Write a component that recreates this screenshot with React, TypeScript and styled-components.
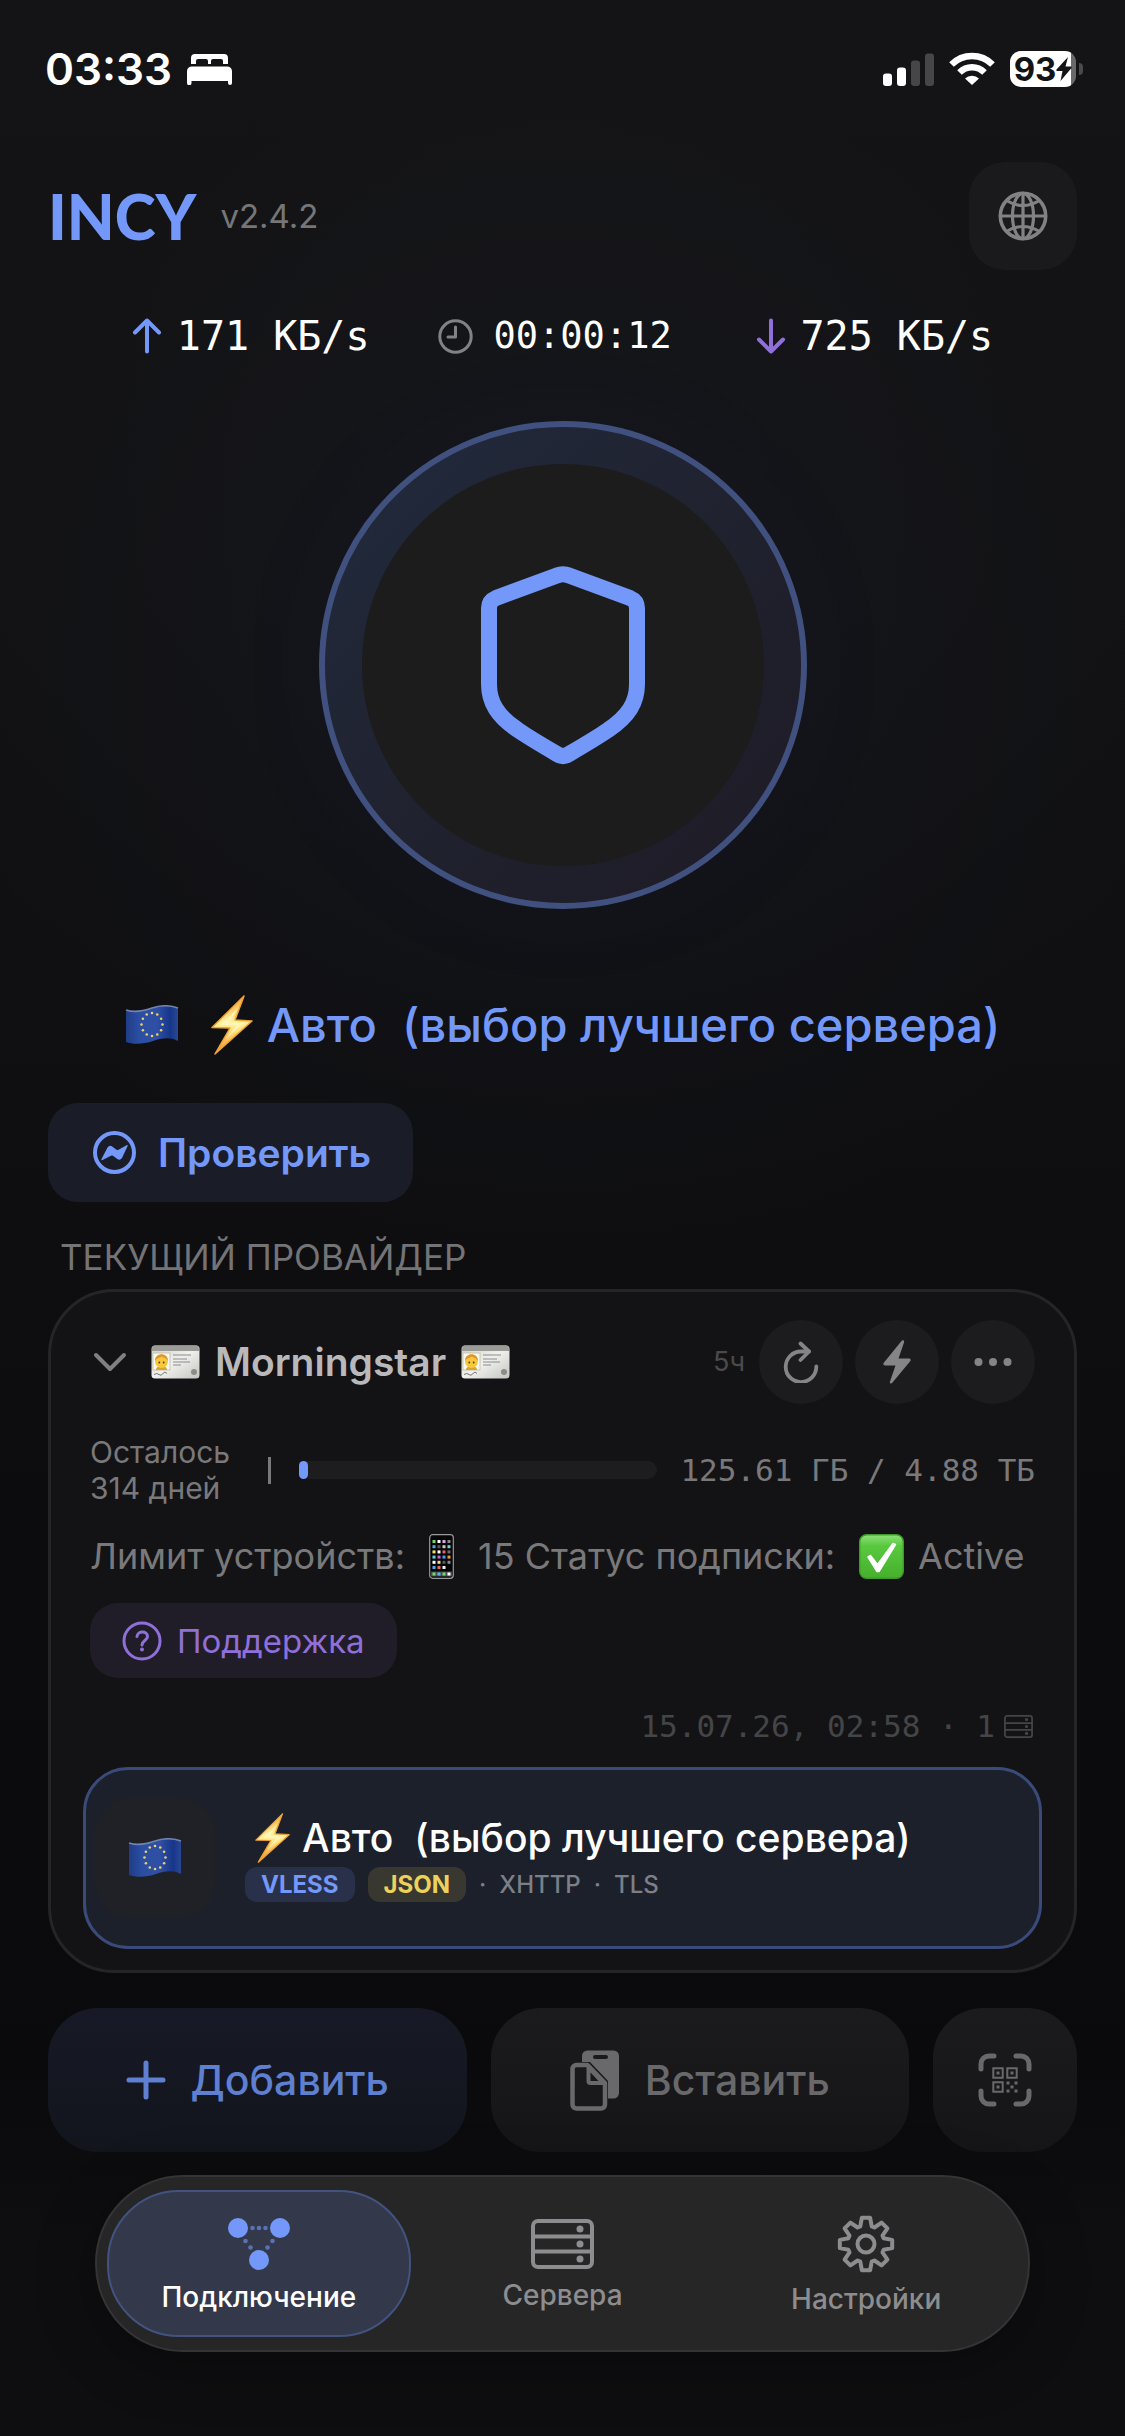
import React from "react";
import styled, { createGlobalStyle } from "styled-components";

const blue = "#7398f9";
const violet = "#8f70d8";
const mono = `"DejaVu Sans Mono", "Liberation Mono", monospace`;

const Global = createGlobalStyle`
  *, *::before, *::after { box-sizing: border-box; }
  body {
    margin: 0;
    background: #0d0d0f;
    color: #ffffff;
    font-family: Inter, "Noto Sans", sans-serif;
    -webkit-font-smoothing: antialiased;
  }
  button { font: inherit; border: 0; margin: 0; padding: 0; cursor: pointer; }
  h1, h2, h3, p { margin: 0; }
  svg { display: block; flex: none; }
`;

const Page = styled.div`
  display: flex;
  flex-direction: column;
  min-height: 100vh;
  padding: 0 48px 84px;
  background:
    radial-gradient(circle 620px at 50% 665px, rgba(80, 110, 200, 0.05), rgba(80, 110, 200, 0) 100%),
    linear-gradient(180deg, #141416 0%, #121214 25%, #0f0f11 45%, #0c0c0e 65%, #0a0a0c 85%, #0e0e10 92%, #0e0e10 100%);
`;

/* ---------- status bar ---------- */

const StatusBar = styled.div`
  display: flex;
  align-items: center;
  justify-content: space-between;
  height: 138px;
  margin: 0 -6px 0 -3px;
`;

const StatusGroup = styled.div<{ $gap: number }>`
  display: flex;
  align-items: center;
  gap: ${(p) => p.$gap}px;
`;

const Clock = styled.time`
  font-size: 44px;
  line-height: 48px;
  font-weight: 600;
`;

const Battery = styled.div`
  display: flex;
  align-items: center;
  gap: 3px;
`;

const BatteryBody = styled.div`
  display: flex;
  align-items: center;
  justify-content: center;
  width: 66px;
  height: 36px;
  border-radius: 11px;
  background: linear-gradient(90deg, #ffffff 61px, #68686a 61px);
  color: #141416;
  font-size: 33px;
  line-height: 36px;
  font-weight: 700;
`;

const BatteryCap = styled.div`
  width: 4px;
  height: 12px;
  border-radius: 0 6px 6px 0;
  background: #4a4a4c;
`;

/* ---------- header ---------- */

const Header = styled.header`
  display: flex;
  align-items: center;
  justify-content: space-between;
  margin-top: 24px;
`;

const Brand = styled.div`
  display: flex;
  align-items: center;
  gap: 24px;
`;

const Logo = styled.h1`
  font-family: Lato, Inter, sans-serif;
  font-size: 62px;
  line-height: 72px;
  font-weight: 900;
  color: ${blue};
`;

const Version = styled.span`
  font-size: 33px;
  line-height: 40px;
  color: #767678;
`;

const GlobeButton = styled.button`
  display: grid;
  place-items: center;
  width: 108px;
  height: 108px;
  border-radius: 36px;
  background: #1a1a1c;
  color: #828284;
`;

/* ---------- connection ---------- */

const Stats = styled.div`
  display: flex;
  justify-content: center;
  gap: 68px;
  margin-top: 42px;
`;

const Stat = styled.div<{ $timer?: boolean }>`
  display: flex;
  align-items: center;
  gap: ${(p) => (p.$timer ? 21 : 15)}px;
  min-width: ${(p) => (p.$timer ? 250 : 0)}px;
  font-family: ${mono};
  font-size: ${(p) => (p.$timer ? 37 : 40)}px;
  line-height: 48px;
`;

const PowerButton = styled.button`
  display: grid;
  place-items: center;
  align-self: center;
  width: 488px;
  height: 488px;
  margin-top: 61px;
  border: 6px solid #41517f;
  border-radius: 50%;
  background: linear-gradient(135deg, #21293b 10%, #20222f 50%, #1e1c27 90%);
  box-shadow: 0 0 120px rgba(70, 100, 190, 0.04);
`;

const PowerCore = styled.span`
  display: grid;
  place-items: center;
  width: 402px;
  height: 402px;
  border-radius: 50%;
  background: #1c1c1d;
`;

const CurrentServer = styled.h2`
  display: flex;
  align-items: center;
  justify-content: center;
  margin-top: 86px;
  font-size: 47px;
  line-height: 60px;
  font-weight: 500;
  white-space: pre;
  color: ${blue};
`;

const FlagGap = styled.span`
  width: 32px;
`;

const BoltGap = styled.span`
  width: 14px;
`;

const CheckButton = styled.button`
  display: flex;
  align-items: center;
  align-self: flex-start;
  gap: 22px;
  height: 99px;
  margin-top: 48px;
  padding: 0 42px 0 45px;
  border-radius: 30px;
  background: #1a1d28;
  color: ${blue};
  font-size: 39px;
  line-height: 48px;
  font-weight: 600;
`;

/* ---------- provider card ---------- */

const SectionLabel = styled.h2`
  margin-top: 35px;
  padding-left: 12px;
  font-size: 35px;
  line-height: 40px;
  font-weight: 400;
  color: #747476;
`;

const Card = styled.section`
  display: flex;
  flex-direction: column;
  margin-top: 12px;
  padding: 28px 32px 21px;
  border: 3px solid #252527;
  border-radius: 66px;
  background: #131315;
`;

const CardHeader = styled.div`
  display: flex;
  align-items: center;
  justify-content: space-between;
  padding: 0 7px 0 10px;
`;

const ProviderButton = styled.button`
  display: flex;
  align-items: center;
  background: none;
  color: #808082;
`;

const ProviderName = styled.span`
  display: flex;
  align-items: center;
  gap: 15px;
  margin-left: 24px;
  font-size: 39px;
  line-height: 48px;
  font-weight: 600;
  color: #b9b9bb;
`;

const Actions = styled.div`
  display: flex;
  align-items: center;
  gap: 12px;
`;

const Age = styled.span`
  margin-right: 2px;
  font-size: 27px;
  line-height: 36px;
  color: #4a4a4c;
`;

const RoundButton = styled.button`
  display: grid;
  place-items: center;
  width: 84px;
  height: 84px;
  border-radius: 50%;
  background: #1c1c1e;
  color: #858587;
`;

const UsageRow = styled.div`
  display: flex;
  align-items: center;
  margin-top: 30px;
  padding: 0 7px;
  font-size: 30px;
  line-height: 36px;
  color: #79797b;
`;

const DaysLeft = styled.p`
  width: 178px;
`;

const Divider = styled.span`
  width: 3px;
  height: 27px;
  background: #79797b;
`;

const Track = styled.div`
  flex: 1;
  height: 18px;
  margin: 0 23px 0 28px;
  border-radius: 9px;
  background: #1d1d1f;
`;

const Fill = styled.div`
  min-width: 9px;
  height: 100%;
  border-radius: 5px;
  background: ${blue};
`;

const Traffic = styled.span`
  font-family: ${mono};
  font-size: 31px;
  white-space: pre;
`;

const Notice = styled.p`
  display: flex;
  align-items: center;
  margin-top: 26px;
  padding: 0 7px;
  font-size: 36px;
  line-height: 48px;
  white-space: pre;
  color: #79797b;
`;

const EmojiSlot = styled.span<{ $left: number; $right: number }>`
  display: inline-flex;
  padding: 0 ${(p) => p.$right}px 0 ${(p) => p.$left}px;
`;

const SupportLink = styled.a`
  display: flex;
  align-items: center;
  align-self: flex-start;
  gap: 15px;
  height: 75px;
  margin: 23px 7px 0;
  padding: 0 32px;
  border-radius: 28px;
  background: #201d28;
  color: ${violet};
  font-size: 33px;
  line-height: 40px;
  text-decoration: none;
`;

const Updated = styled.div`
  display: flex;
  align-items: center;
  justify-content: flex-end;
  gap: 9px;
  margin-top: 28px;
  padding: 0 9px;
  font-family: ${mono};
  font-size: 31px;
  line-height: 40px;
  white-space: pre;
  color: #454547;
`;

const ServerButton = styled.button`
  display: flex;
  align-items: center;
  gap: 30px;
  height: 182px;
  margin-top: 21px;
  padding: 0 9px;
  border: 3px solid #3a4b7b;
  border-radius: 45px;
  background: #1c202b;
  color: #ffffff;
  text-align: left;
`;

const FlagTile = styled.span`
  display: grid;
  place-items: center;
  width: 120px;
  height: 120px;
  border-radius: 36px;
  background: #1f2126;
`;

const ServerInfo = styled.span`
  display: flex;
  flex-direction: column;
  gap: 2px;
  padding-bottom: 3px;
`;

const ServerName = styled.span`
  display: flex;
  align-items: center;
  gap: 12px;
  padding-left: 10px;
  font-size: 39px;
  line-height: 54px;
  font-weight: 500;
  white-space: pre;
`;

const Tags = styled.span`
  display: flex;
  align-items: center;
  gap: 13px;
  font-size: 24px;
  line-height: 35px;
  font-weight: 500;
  color: #7c7f86;
`;

const Tag = styled.span<{ $tone: "blue" | "yellow" }>`
  padding: 0 16px;
  border-radius: 12px;
  font-weight: 700;
  color: ${(p) => (p.$tone === "blue" ? blue : "#ecd15c")};
  background: ${(p) => (p.$tone === "blue" ? "#29314a" : "#393830")};
`;

/* ---------- add / paste / scan ---------- */

const ActionRow = styled.div`
  display: grid;
  grid-template-columns: 1fr 1fr 144px;
  gap: 24px;
  margin-top: 35px;
`;

const BigButton = styled.button<{ $primary?: boolean }>`
  display: flex;
  align-items: center;
  justify-content: center;
  gap: 25px;
  height: 144px;
  border-radius: 50px;
  font-size: 41px;
  line-height: 54px;
  font-weight: 500;
  background: ${(p) => (p.$primary ? "linear-gradient(#171a26, #12151c)" : "linear-gradient(#1b1b1d, #151517)")};
  color: ${(p) => (p.$primary ? "#5f7fd0" : "#69696b")};
`;

/* ---------- tab bar ---------- */

const TabBar = styled.nav`
  display: grid;
  grid-template-columns: repeat(3, 1fr);
  height: 177px;
  margin: 23px 47px 0;
  padding: 13px 10px;
  border: 2px solid #343436;
  border-radius: 88px;
  background: #262626;
  box-shadow: 0 12px 60px rgba(0, 0, 0, 0.3);
`;

const Tab = styled.a<{ $active?: boolean }>`
  display: flex;
  flex-direction: column;
  align-items: center;
  justify-content: center;
  gap: 8px;
  padding-top: 5px;
  border: 2px solid ${(p) => (p.$active ? "#42537f" : "transparent")};
  border-radius: 72px;
  background: ${(p) => (p.$active ? "#33394a" : "transparent")};
  color: ${(p) => (p.$active ? "#ffffff" : "#8d8d8f")};
  font-size: 28px;
  line-height: 36px;
  font-weight: 500;
  text-decoration: none;
`;

/* ---------- drawings ---------- */

const BedIcon = () => (
  <svg width="45" height="32" viewBox="0 0 45 32" fill="#fff" aria-hidden="true">
    <path d="M4 11V5a4 4 0 0 1 4-4h29a4 4 0 0 1 4 4v6h-5V8a2 2 0 0 0-2-2h-8a2 2 0 0 0-2 2v3h-3V8a2 2 0 0 0-2-2h-8a2 2 0 0 0-2 2v3z" />
    <path d="M0 18a5 5 0 0 1 5-4.500h35a5 5 0 0 1 5 4.500v12a2 2 0 0 1-4 0v-2H4.500v2a2 2 0 0 1-4.500 0z" />
  </svg>
);

const SignalIcon = () => (
  <svg width="51" height="33" viewBox="0 0 51 33" aria-label="Signal">
    <rect x="0" y="20.500" width="9" height="12.500" rx="3" fill="#fff" />
    <rect x="14" y="14.500" width="9" height="18.500" rx="3" fill="#fff" />
    <rect x="28" y="7.500" width="9" height="25.500" rx="3" fill="#464648" />
    <rect x="42" y="0.500" width="9" height="32.500" rx="3" fill="#464648" />
  </svg>
);

const WifiIcon = () => (
  <svg width="46" height="34" viewBox="0 0 46 34" fill="none" stroke="#fff" strokeWidth="6.500" aria-label="Wi-Fi">
    <path d="M2.500 12.500a29 29 0 0 1 41 0" />
    <path d="M10.500 20.500a17.700 17.700 0 0 1 25 0" />
    <path d="M16 26.500a10 10 0 0 1 14 0L23 33z" fill="#fff" stroke="none" />
  </svg>
);

const ChargeIcon = () => (
  <svg width="16" height="24" viewBox="0 0 16 24" fill="#141416" aria-hidden="true">
    <path d="M12 0 0.500 12.500c-.5.800 0 1.500.800 1.500H6.500L4.500 24 15.500 11c.5-.800 0-1.500-.8-1.500H9.500z" />
  </svg>
);

const GlobeIcon = () => (
  <svg width="50" height="50" viewBox="0 0 50 50" fill="none" stroke="currentColor" strokeWidth="3.200" aria-hidden="true">
    <circle cx="25" cy="25" r="22.700" strokeWidth="3.600" />
    <ellipse cx="25" cy="25" rx="10.500" ry="22.700" />
    <path d="M25 2v46M2 25h46M8.500 9.500Q25 19.500 41.500 9.500M8.500 40.500Q25 30.500 41.500 40.500" />
  </svg>
);

const ArrowIcon = ({ down }: { down?: boolean }) => (
  <svg width="30" height="36" viewBox="0 0 30 36" fill="none" stroke={down ? violet : blue} strokeWidth="4" strokeLinecap="round" strokeLinejoin="round" aria-hidden="true">
    <path d={down ? "M15 2.500v31M3 21.500l12 12 12-12" : "M15 33.500v-31M3 14.500l12-12 12 12"} />
  </svg>
);

const TimerIcon = () => (
  <svg width="35" height="35" viewBox="0 0 35 35" fill="none" stroke="#828284" strokeWidth="3" strokeLinecap="round" strokeLinejoin="round" aria-hidden="true">
    <circle cx="17.500" cy="17.500" r="15.700" />
    <path d="M17.500 8v10h-7.500" />
  </svg>
);

const ShieldIcon = () => (
  <svg width="166" height="200" viewBox="0 0 166 200" fill="none" stroke={blue} strokeWidth="16" strokeLinejoin="round" aria-hidden="true">
    <path d="M77 10.500Q83 8 89 10.500L150 33Q157 36 157 43V119C157 137 149 151 128 165Q118 172 89 189Q83 193 77 189Q48 172 38 165C17 151 9 137 9 119V43Q9 36 16 33Z" />
  </svg>
);

const flagStars = Array.from({ length: 12 }, (_, i) => {
  const a = (i * Math.PI) / 6;
  return [27 + Math.sin(a) * 10.5, 19.5 - Math.cos(a) * 11.5];
});

const FlagEU = () => (
  <svg width="54" height="40" viewBox="0 0 54 40" role="img" aria-label="EU">
    <defs>
      <linearGradient id="eu-cloth" x1="0" y1="0" x2="1" y2="0">
        <stop offset="0" stopColor="#1f3c86" />
        <stop offset="0.250" stopColor="#2b4ea3" />
        <stop offset="0.600" stopColor="#2e4fa4" />
        <stop offset="0.850" stopColor="#17368a" />
        <stop offset="1" stopColor="#2a4794" />
      </linearGradient>
    </defs>
    <path d="M1 5C10 8 18 6 27 3S45 0 53 3V36C45 32 37 33 28 36S9 40 1 37Z" fill="url(#eu-cloth)" />
    <path d="M1 5C10 8 18 6 27 3S45 0 53 3" stroke="#7184b0" strokeWidth="1.500" fill="none" />
    {flagStars.map(([x, y], i) => (
      <circle key={i} cx={x} cy={y} r="1.300" fill="#e9d36a" />
    ))}
  </svg>
);

const BoltEmoji = ({ size }: { size: number }) => (
  <svg width={Math.round(size * 0.7)} height={size} viewBox="0 0 42 60" role="img" aria-label="Молния">
    <defs>
      <linearGradient id="bolt-fill" x1="0" y1="0" x2="0" y2="1">
        <stop offset="0" stopColor="#f5a93a" />
        <stop offset="0.450" stopColor="#fff3a0" />
        <stop offset="0.600" stopColor="#ffe178" />
        <stop offset="1" stopColor="#ef8f26" />
      </linearGradient>
    </defs>
    <path d="M33 1 1 32.500l18 .5L4 59 41 26l-17-1z" fill="url(#bolt-fill)" stroke="#f0a235" strokeWidth="1.500" strokeLinejoin="round" />
    <path d="M28 12 9 30l16 .5L15 44 33 28l-15-.5z" fill="#fff8c4" opacity="0.700" />
  </svg>
);

const CheckIcon = () => (
  <svg width="43" height="43" viewBox="0 0 43 43" aria-hidden="true">
    <circle cx="21.500" cy="21.500" r="19.500" fill="none" stroke={blue} strokeWidth="4" />
    <path d="M8.500 28 14.500 16.500q2-3 4.700-1l4.300 3.300q1 .6 2 0l8-4.500q1.800-.8 1 1L29 27q-2 3-4.700 1l-4.300-3.300q-1-.6-2 0L9.500 29q-1.800.8-1-1z" fill={blue} />
  </svg>
);

const ChevronIcon = () => (
  <svg width="34" height="20" viewBox="0 0 34 20" fill="none" stroke="currentColor" strokeWidth="4" strokeLinecap="round" strokeLinejoin="round" aria-hidden="true">
    <path d="M3 3l14 14L31 3" />
  </svg>
);

const IdEmoji = () => (
  <svg width="49" height="34" viewBox="0 0 49 34" role="img" aria-label="ID">
    <defs>
      <linearGradient id="id-plate" x1="0" y1="0" x2="1" y2="1">
        <stop offset="0" stopColor="#cfcfcb" />
        <stop offset="0.500" stopColor="#f0f0ee" />
        <stop offset="1" stopColor="#c4c4c0" />
      </linearGradient>
    </defs>
    <rect x="0.500" y="0.500" width="48" height="33" rx="3.500" fill="url(#id-plate)" />
    <path d="M1 4a3.500 3.500 0 0 1 3.500-3.500h40a3.500 3.500 0 0 1 3.500 3.500v2H1z" fill="#9b9b98" />
    <rect x="2" y="8" width="17" height="17" fill="#fbfbf6" stroke="#c2bc98" strokeWidth="0.800" />
    <path d="M5 25c0-3 3-4 5.500-4s5.500 1 5.500 4z" fill="#d9a52e" />
    <circle cx="10.500" cy="16.500" r="6.500" fill="#f8c93c" />
    <path d="M4 16c-.5-9 13.500-9 13 0-1.500-3-5-3.500-6.500-4.500-1.500 1.500-5 1.500-6.500 4.500z" fill="#e0952a" />
    <circle cx="8.300" cy="17.500" r="0.900" fill="#5a3a12" />
    <circle cx="12.700" cy="17.500" r="0.900" fill="#5a3a12" />
    <path d="M22 10h18M22 14h14M22 17h17M22 20h8" stroke="#8c8c8a" strokeWidth="1.200" />
    <path d="M3 29.500q3-2 5 0t4-1 4 0" stroke="#77777a" strokeWidth="1" fill="none" />
    <circle cx="43" cy="27" r="3" fill="#8b8b89" />
  </svg>
);

const RefreshIcon = () => (
  <svg width="36" height="42" viewBox="0 0 36 42" fill="none" stroke="currentColor" strokeWidth="3.800" strokeLinecap="round" strokeLinejoin="round" aria-hidden="true">
    <path d="M26 10.500H18A15.300 15.300 0 1 0 33.300 25.500" />
    <path d="M17.500 2.500l8.500 8-8.500 8.500" />
  </svg>
);

const BoltIcon = () => (
  <svg width="28" height="44" viewBox="0 0 28 44" fill="currentColor" aria-hidden="true">
    <path d="M18.500 1 .8 22.800c-1 1.400-.3 2.700 1.200 2.700h10.500L7 41.500c-.7 2 1.200 2.700 2.300 1.300L27.200 21.200c1-1.400.3-2.700-1.200-2.700H15.500L21 2.500c.7-2-1.300-2.900-2.500-1.500z" />
  </svg>
);

const MoreIcon = () => (
  <svg width="38" height="8" viewBox="0 0 38 8" fill="currentColor" aria-hidden="true">
    <circle cx="4.500" cy="4" r="4" />
    <circle cx="19" cy="4" r="4" />
    <circle cx="33.500" cy="4" r="4" />
  </svg>
);

const screenColors = [
  "#6fdc6a", "#ffffff", "#d9a6f2", "#8a8a8c",
  "#4fa8f0", "#58585a", "#c8c8b8", "#6fd6ea",
  "#f2e36a", "#ffffff", "#e06464", "#6c6c6e",
  "#5fd0e6", "#cf5ae0", "#4f9af0", "#f09a35",
  "#ffffff", "#f0e070", "#5a5a5c", "#8a8a8c",
  "#4fa8f0", "#e86a5c", "#f0f0f0",
];
const dockColors = ["#6fdc6a", "#53b9ef", "#6fdc6a", "#ffffff"];

const PhoneEmoji = () => (
  <svg width="25" height="45" viewBox="0 0 25 45" role="img" aria-label="Телефон">
    <rect x="0.700" y="0.700" width="23.600" height="43.600" rx="3" fill="#050505" stroke="#9a9a9c" strokeWidth="1.200" />
    <rect x="2" y="37.500" width="21" height="5" fill="#4a4a4c" />
    {screenColors.map((c, i) => (
      <rect key={i} x={3.5 + (i % 4) * 5} y={6 + Math.floor(i / 4) * 5.2} width="3" height="3" fill={c} />
    ))}
    {dockColors.map((c, i) => (
      <rect key={i} x={3.5 + i * 5} y="38.500" width="3" height="3" fill={c} />
    ))}
  </svg>
);

const DoneEmoji = () => (
  <svg width="45" height="45" viewBox="0 0 45 45" role="img" aria-label="Готово">
    <defs>
      <linearGradient id="done-fill" x1="0" y1="0" x2="0" y2="1">
        <stop offset="0" stopColor="#8fe07a" />
        <stop offset="0.250" stopColor="#58c93f" />
        <stop offset="1" stopColor="#46b02c" />
      </linearGradient>
    </defs>
    <rect x="0.700" y="0.700" width="43.600" height="43.600" rx="7" fill="url(#done-fill)" stroke="#3f9a2a" strokeWidth="1.400" />
    <path d="M9 23l2.500-1.500 7 9L34 9.500l2.500 1L20 37.500h-2z" fill="#fff" stroke="#fff" strokeWidth="1.500" strokeLinejoin="round" />
  </svg>
);

const HelpIcon = () => (
  <svg width="40" height="40" viewBox="0 0 40 40" fill="none" stroke="currentColor" strokeWidth="3" strokeLinecap="round" strokeLinejoin="round" aria-hidden="true">
    <circle cx="20" cy="20" r="18" />
    <path d="M15 15.500c.5-6 10.500-6 10.500 0 0 4-5.500 4-5.500 8.500" />
    <circle cx="20" cy="28.500" r="1" fill="currentColor" strokeWidth="2" />
  </svg>
);

const ServersIcon = ({ small }: { small?: boolean }) => (
  <svg width={small ? 29 : 63} height={small ? 23 : 50} viewBox="0 0 63 50" fill="none" stroke="currentColor" strokeWidth={small ? 3.8 : 4} aria-hidden="true">
    <rect x="2" y="2" width="59" height="46" rx="5" />
    <path d="M2 17.500h59M2 32.500h59" />
    <g fill="currentColor" stroke="none">
      <circle cx="49" cy="10" r="3.500" />
      <circle cx="49" cy="25" r="3.500" />
      <circle cx="49" cy="40" r="3.500" />
    </g>
  </svg>
);

const PlusIcon = () => (
  <svg width="40" height="40" viewBox="0 0 40 40" fill="none" stroke="currentColor" strokeWidth="5" strokeLinecap="round" aria-hidden="true">
    <path d="M20 3v34M3 20h34" />
  </svg>
);

const PasteIcon = () => (
  <svg width="50" height="61" viewBox="0 0 50 61" aria-hidden="true">
    <path d="M12 12V6a5.500 5.500 0 0 1 5.500-5.500h26A5.500 5.500 0 0 1 49 6v37a5.500 5.500 0 0 1-5.500 5.500H38V31L20 12z" fill="currentColor" />
    <rect x="23" y="5" width="15" height="4" rx="2" fill="#1a1a1c" />
    <path d="M6 15h11.500L35 33v21.500a4 4 0 0 1-4 4H6.500a4 4 0 0 1-4-4V19a4 4 0 0 1 4-4z" fill="#19191b" stroke="currentColor" strokeWidth="4.500" strokeLinejoin="round" />
    <path d="M18 16v15a2.500 2.500 0 0 0 2.500 2.500H35L19 16z" fill="currentColor" stroke="currentColor" strokeWidth="3" strokeLinejoin="round" />
    <path d="M20.500 22.500v8.500h8z" fill="#19191b" />
  </svg>
);

const QrIcon = () => (
  <svg width="54" height="54" viewBox="0 0 54 54" fill="none" stroke="currentColor" aria-hidden="true">
    <path d="M3 16v-5a8 8 0 0 1 8-8h5M38 3h5a8 8 0 0 1 8 8v5M51 38v5a8 8 0 0 1-8 8h-5M16 51h-5a8 8 0 0 1-8-8v-5" strokeWidth="5" strokeLinecap="round" />
    <path d="M15.300 15.300h9.400v9.400h-9.400zM29.300 15.300h9.400v9.400h-9.400zM15.300 29.300h9.400v9.400h-9.400z" strokeWidth="2" />
    <path d="M18.500 18.500h3v3h-3zM32.500 18.500h3v3h-3zM18.500 32.500h3v3h-3zM28.500 28.500h3v3h-3zM36.500 28.500h3v3h-3zM32.500 32.500h3v3h-3zM28.500 36.500h3v3h-3zM36.500 36.500h3v3h-3z" fill="currentColor" stroke="none" />
  </svg>
);

const NodesIcon = () => (
  <svg width="64" height="54" viewBox="0 0 64 54" fill={blue} aria-hidden="true">
    <circle cx="11" cy="11" r="10" />
    <circle cx="53" cy="11" r="10" />
    <circle cx="32" cy="43" r="10" />
    <g opacity="0.600">
      <circle cx="25.500" cy="11" r="2.300" />
      <circle cx="32" cy="11" r="2.300" />
      <circle cx="38.500" cy="11" r="2.300" />
      <circle cx="18.500" cy="24" r="2.300" />
      <circle cx="23.500" cy="30.500" r="2.300" />
      <circle cx="45.500" cy="24" r="2.300" />
      <circle cx="40.500" cy="30.500" r="2.300" />
    </g>
  </svg>
);

const gearOutline = Array.from({ length: 8 }, (_, i) => {
  const point = (radius: number, degrees: number) => {
    const a = ((i * 45 + degrees) * Math.PI) / 180;
    return `${(29 + Math.sin(a) * radius).toFixed(2)} ${(29 - Math.cos(a) * radius).toFixed(2)}`;
  };
  return [point(18.5, -18), point(26.5, -9), point(26.5, 9), point(18.5, 18)].join("L");
}).join("L");

const GearIcon = () => (
  <svg width="58" height="58" viewBox="0 0 58 58" fill="none" stroke="currentColor" strokeWidth="4" strokeLinejoin="round" aria-hidden="true">
    <path d={`M${gearOutline}Z`} />
    <circle cx="29" cy="29" r="8.500" />
  </svg>
);

/* ---------- screen ---------- */

const usage = { usedGb: 125.61, totalGb: 4.88 * 1024 };
const serverTitle = "Авто  (выбор лучшего сервера)";

export default function App() {
  const percent = (usage.usedGb / usage.totalGb) * 100;
  return (
    <>
      <Global />
      <Page>
        <StatusBar>
          <StatusGroup $gap={15}>
            <Clock>03:33</Clock>
            <BedIcon />
          </StatusGroup>
          <StatusGroup $gap={15}>
            <SignalIcon />
            <WifiIcon />
            <Battery>
              <BatteryBody>
                93
                <ChargeIcon />
              </BatteryBody>
              <BatteryCap />
            </Battery>
          </StatusGroup>
        </StatusBar>

        <Header>
          <Brand>
            <Logo>INCY</Logo>
            <Version>v2.4.2</Version>
          </Brand>
          <GlobeButton type="button" aria-label="Язык">
            <GlobeIcon />
          </GlobeButton>
        </Header>

        <Stats>
          <Stat>
            <ArrowIcon />
            <span>171 КБ/s</span>
          </Stat>
          <Stat $timer>
            <TimerIcon />
            <span>00:00:12</span>
          </Stat>
          <Stat>
            <ArrowIcon down />
            <span>725 КБ/s</span>
          </Stat>
        </Stats>

        <PowerButton type="button" aria-label="Отключить">
          <PowerCore>
            <ShieldIcon />
          </PowerCore>
        </PowerButton>

        <CurrentServer>
          <FlagEU />
          <FlagGap />
          <BoltEmoji size={60} />
          <BoltGap />
          {serverTitle}
        </CurrentServer>

        <CheckButton type="button">
          <CheckIcon />
          Проверить
        </CheckButton>

        <SectionLabel>ТЕКУЩИЙ ПРОВАЙДЕР</SectionLabel>

        <Card>
          <CardHeader>
            <ProviderButton type="button" aria-expanded="true">
              <ChevronIcon />
              <ProviderName>
                <IdEmoji />
                Morningstar
                <IdEmoji />
              </ProviderName>
            </ProviderButton>
            <Actions>
              <Age>5ч</Age>
              <RoundButton type="button" aria-label="Обновить">
                <RefreshIcon />
              </RoundButton>
              <RoundButton type="button" aria-label="Пинг">
                <BoltIcon />
              </RoundButton>
              <RoundButton type="button" aria-label="Ещё">
                <MoreIcon />
              </RoundButton>
            </Actions>
          </CardHeader>

          <UsageRow>
            <DaysLeft>
              Осталось
              <br />
              314 дней
            </DaysLeft>
            <Divider />
            <Track role="progressbar" aria-valuenow={Math.round(percent)} aria-valuemin={0} aria-valuemax={100} aria-label="Трафик">
              <Fill style={{ width: `${percent}%` }} />
            </Track>
            <Traffic>125.61 ГБ / 4.88 ТБ</Traffic>
          </UsageRow>

          <Notice>
            Лимит устройств:
            <EmojiSlot $left={24} $right={24}>
              <PhoneEmoji />
            </EmojiSlot>
            15 Статус подписки:
            <EmojiSlot $left={24} $right={14}>
              <DoneEmoji />
            </EmojiSlot>
            Active
          </Notice>

          <SupportLink href="#support">
            <HelpIcon />
            Поддержка
          </SupportLink>

          <Updated>
            <span>15.07.26, 02:58 · 1</span>
            <ServersIcon small />
          </Updated>

          <ServerButton type="button">
            <FlagTile>
              <FlagEU />
            </FlagTile>
            <ServerInfo>
              <ServerName>
                <BoltEmoji size={50} />
                {serverTitle}
              </ServerName>
              <Tags>
                <Tag $tone="blue">VLESS</Tag>
                <Tag $tone="yellow">JSON</Tag>
                <span>·</span>
                <span>XHTTP</span>
                <span>·</span>
                <span>TLS</span>
              </Tags>
            </ServerInfo>
          </ServerButton>
        </Card>

        <ActionRow>
          <BigButton type="button" $primary>
            <PlusIcon />
            Добавить
          </BigButton>
          <BigButton type="button">
            <PasteIcon />
            Вставить
          </BigButton>
          <BigButton type="button" aria-label="Сканировать QR-код">
            <QrIcon />
          </BigButton>
        </ActionRow>

        <TabBar>
          <Tab href="#connection" $active aria-current="page">
            <NodesIcon />
            Подключение
          </Tab>
          <Tab href="#servers">
            <ServersIcon />
            Сервера
          </Tab>
          <Tab href="#settings">
            <GearIcon />
            Настройки
          </Tab>
        </TabBar>
      </Page>
    </>
  );
}
